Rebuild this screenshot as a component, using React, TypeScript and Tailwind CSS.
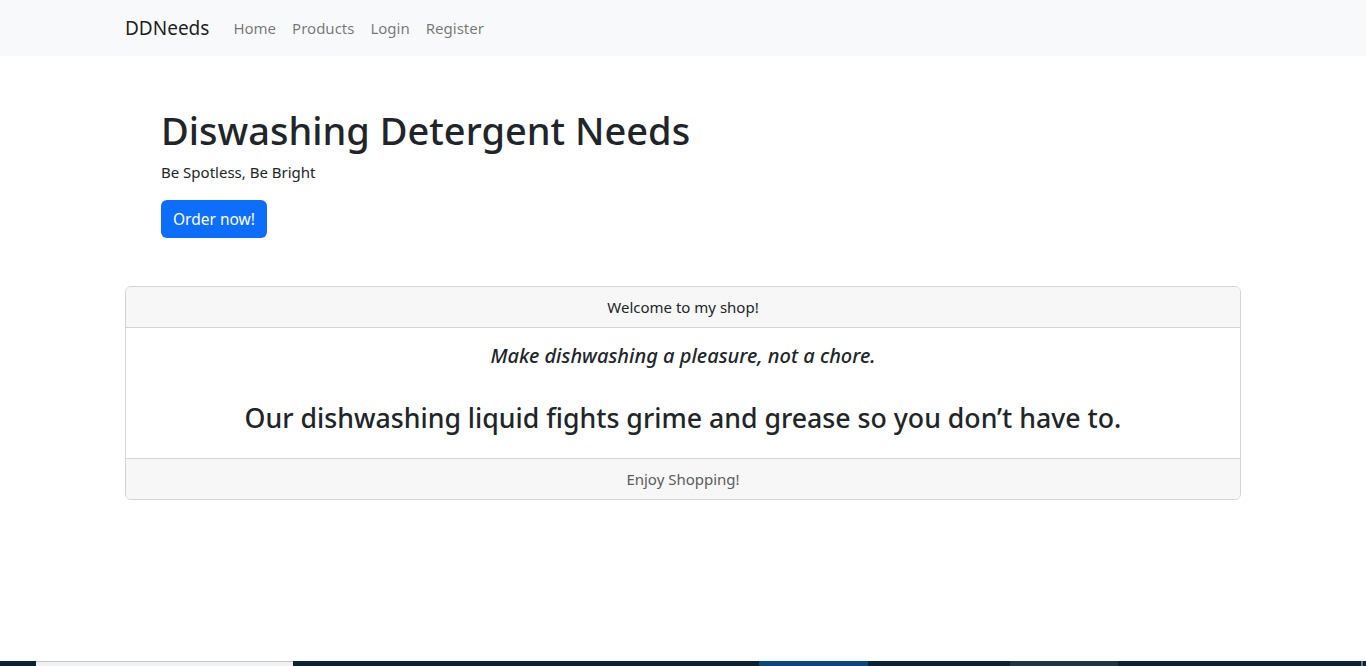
import React from "react";

const font = { fontFamily: '"Noto Sans", "Open Sans", Arial, sans-serif' };

export default function App() {
  return (
    <div
      className="h-[666px] flex flex-col bg-white text-[#212529] overflow-hidden"
      style={font}
    >
      <nav className="bg-[#f8f9fa] h-[56px] shrink-0">
        <div className="mx-auto w-[1140px] px-3 h-full flex items-center">
          <a className="text-[19px] leading-[30px] text-black/90 mr-4">DDNeeds</a>
          <ul className="flex text-[15px] leading-6 text-black/55">
            <li className="px-2 py-2">Home</li>
            <li className="px-2 py-2">Products</li>
            <li className="px-2 py-2">Login</li>
            <li className="px-2 py-2">Register</li>
          </ul>
        </div>
      </nav>

      <main className="flex-1">
        <div className="mx-auto w-[1140px] p-12 pt-[50px] pb-[48px]">
          <h1 className="text-[38px] leading-[48px] font-medium">
            Diswashing Detergent Needs
          </h1>
          <p className="text-[15px] leading-6 mt-[6px] mb-4">Be Spotless, Be Bright</p>
          <button className="bg-[#0d6efd] text-white text-[15.5px] leading-6 px-3 py-[7px] rounded-md">
            Order now!
          </button>
        </div>

        <div className="mx-auto w-[1140px] px-3">
          <div className="border border-[#d3d4d5] rounded-md overflow-hidden text-center">
            <div className="bg-[#f7f7f7] border-b border-[#d3d4d5] py-2 px-4 text-[15px] leading-6">
              Welcome to my shop!
            </div>
            <div className="px-4 pt-4 pb-[21px] bg-white">
              <h5 className="text-[20px] leading-6 font-medium italic">
                Make dishwashing a pleasure, not a chore.
              </h5>
              <h2 className="mt-[31px] text-[26.7px] leading-[38px] font-medium">
                Our dishwashing liquid fights grime and grease so you don’t have to.
              </h2>
            </div>
            <div className="bg-[#f7f7f7] border-t border-[#d3d4d5] py-2 px-4 text-[15px] leading-6 text-[#595c5f]">
              Enjoy Shopping!
            </div>
          </div>
        </div>
      </main>

      <div className="h-[5px] shrink-0 flex bg-[#0c2233]">
        <div className="w-[36px]" />
        <div className="w-[257px] bg-[#f0f1f3] border-t border-[#c4c4c4]" />
        <div className="w-[466px]" />
        <div className="w-[109px] bg-[#084a80]" />
        <div className="w-[142px]" />
        <div className="w-[108px] bg-[#1f3447]" />
        <div className="flex-1" />
        <div className="w-[2px] bg-[#6b7a88] mr-[3px]" />
      </div>
    </div>
  );
}
